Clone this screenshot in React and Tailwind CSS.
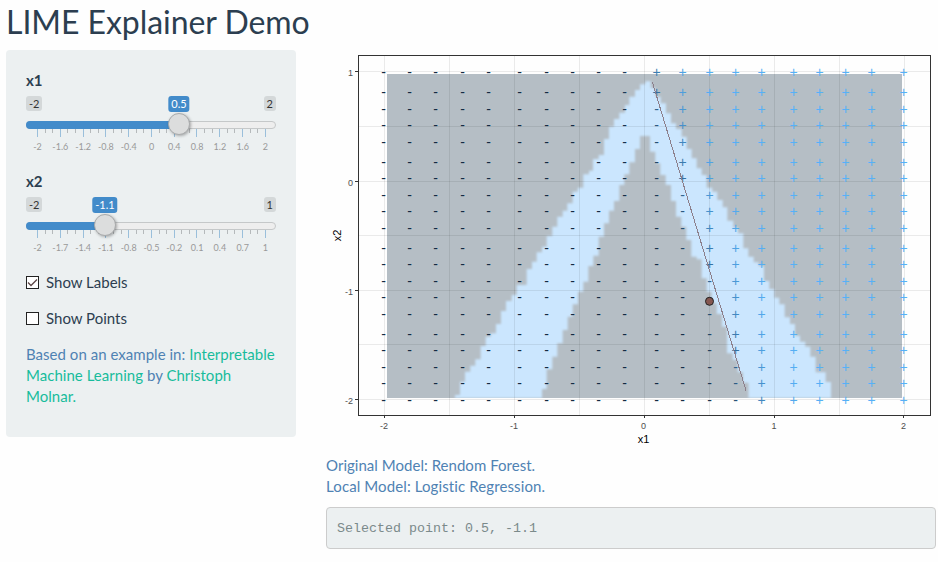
const COLS = [383.5, 409.5, 435.5, 462.5, 488.5, 519.5, 546.5, 572.5, 598.5, 624.5, 656.5, 682.5, 709.5, 735.5, 761.5, 793.5, 819.5, 845.5, 871.5, 903.5];
const ROWS = [72.5, 92.5, 109.5, 125.5, 142.5, 162.5, 178.5, 195.5, 211.5, 228.5, 248.5, 264.5, 281.5, 297.5, 314.5, 334.5, 350.5, 367.5, 383.5, 400.5];

// Each edge of the decision region is a staircase of [x, yEnd] pairs, top to bottom.
const OUTER_LEFT = [
  [645.3, 84.3], [640, 90], [635, 96.7], [629.3, 105], [625, 112.7], [619.3, 119], [614, 126.7], [609, 139],
  [604, 155], [598.7, 159], [593, 170.7], [589, 174.3], [583.3, 187.7], [577.7, 191.7], [572.7, 203.3],
  [567.3, 210.7], [562.7, 216.7], [557.3, 226.7], [552.3, 236], [546.7, 246.7], [542, 252.3], [536.7, 261.7],
  [532, 269], [526.7, 285], [516.7, 295], [511.7, 301], [506, 311], [501, 324], [496, 333.3], [490.7, 336.7],
  [485.7, 346], [480.7, 359.3], [475.3, 365.7], [470.3, 371.7], [465, 381.7], [460, 395], [455, 398],
];
const INNER_LEFT = [
  [640, 149], [635, 162.3], [629.3, 174.3], [624.3, 185], [619.3, 201], [614, 210.7], [609, 223.3], [604, 236.7],
  [598.7, 255.7], [593.3, 266], [588.3, 281.7], [583.3, 291.7], [578, 304.3], [572.7, 316.7], [567.7, 330],
  [562.7, 343.3], [557.3, 356.7], [552.3, 369.3], [546.7, 389], [542, 398],
];
const INNER_RIGHT = [
  [650, 151.7], [655.3, 163.3], [660.3, 175], [665.7, 185], [671, 201], [676, 216.7], [681.3, 226.7], [686.3, 240],
  [691.3, 256.7], [696.7, 259.3], [701.7, 278.3], [706.7, 291.7], [711.7, 303.3], [716.7, 314], [722, 326.7],
  [727, 353.3], [732.7, 360], [737.7, 372.3], [743, 382.7], [748.5, 398],
];
const OUTER_RIGHT = [
  [650.7, 88], [655.7, 96.7], [660.7, 103.3], [666, 113.3], [671, 123.3], [676, 129], [681.7, 136.7],
  [686.7, 149], [691.7, 158.3], [696.7, 168.3], [701.7, 175], [706.7, 187.7], [712.3, 191.7], [717.3, 200],
  [722.7, 207.3], [727.3, 220.7], [733.3, 227.5], [738, 233.3], [743.3, 248.3], [748.3, 256.7], [753.7, 262.3],
  [758.7, 266], [764, 281], [769.3, 289], [774.3, 297.7], [779.3, 304.3], [784.7, 317.3], [790, 324],
  [795, 335.7], [800, 341.7], [805.3, 346.7], [810.3, 356.7], [815.7, 372.3], [825.7, 382], [831, 398],
];

function stairs(edge, top) {
  const pts = [];
  let y = top;
  for (const [x, end] of edge) {
    pts.push([x, y], [x, end]);
    y = end;
  }
  return pts;
}

const REGION = [
  ...stairs(OUTER_RIGHT, 81.3),
  ...stairs(INNER_RIGHT, 136).reverse(),
  ...stairs(INNER_LEFT, 136),
  ...stairs(OUTER_LEFT, 81.3).reverse(),
].map((p) => p.join(",")).join(" ");

const probability = (x, y) => 1 / (1 + Math.exp(-(x - (652.3 + ((y - 82) * 94) / 309.5)) / 15));

function shade(p) {
  const lo = [19, 43, 67];
  const hi = [86, 177, 247];
  return `rgb(${lo.map((c, i) => Math.round(c + (hi[i] - c) * p)).join(",")})`;
}

function Plot() {
  return (
    <svg className="block" width="610" height="400" viewBox="326 50 610 400" fontFamily="'Liberation Sans', Arial, sans-serif">
      <defs>
        <clipPath id="raster"><rect x="387" y="74" width="515" height="324" /></clipPath>
        <filter id="interp" x="-5%" y="-5%" width="110%" height="110%"><feGaussianBlur stdDeviation="1" /></filter>
      </defs>
      <rect x="387" y="74" width="515" height="324" fill="#b5bec5" />
      <g clipPath="url(#raster)">
        <polygon points={REGION} fill="#cbe6fe" filter="url(#interp)" />
      </g>
      <g stroke="#000" strokeOpacity="0.08">
        {[384.5, 449.5, 514.5, 579.5, 644.5, 709.5, 774.5, 839.5, 904.5].map((x) => <path key={x} d={`M${x} 56V415`} />)}
        {[71.5, 126.5, 181.5, 235.5, 290.5, 344.5, 399.5].map((y) => <path key={y} d={`M359 ${y}H930`} />)}
      </g>
      <g fontSize="14" textAnchor="middle">
        {COLS.map((x) => ROWS.map((y) => {
          const p = probability(x, y);
          return (
            <text key={`${x} ${y}`} x={x} y={y + 4.5} fill={shade(p)}>{p > 0.5 ? "+" : "-"}</text>
          );
        }))}
      </g>
      <path d="M652.3 82L746.3 391.5" stroke="#8c7f8b" fill="none" shapeRendering="crispEdges" />
      <circle cx="709.5" cy="301.3" r="4" fill="#855750" stroke="#222" />
      <rect x="358.5" y="55.5" width="572" height="360" fill="none" stroke="#333" />
      <path d="M355 71.5h3M355 181.5h3M355 290.5h3M355 399.5h3M384.5 416v2M514.5 416v2M644.5 416v2M774.5 416v2M903.5 416v2" stroke="#333" />
      <g fontSize="9" fill="#4d4d4d">
        <g textAnchor="end">
          <text x="353" y="76">1</text>
          <text x="353" y="186">0</text>
          <text x="353" y="295">-1</text>
          <text x="353" y="404">-2</text>
        </g>
        <g textAnchor="middle">
          <text x="384" y="429">-2</text>
          <text x="514" y="429">-1</text>
          <text x="643.5" y="429">0</text>
          <text x="774" y="429">1</text>
          <text x="903.5" y="429">2</text>
        </g>
      </g>
      <g fontSize="11" fill="#000" textAnchor="middle">
        <text x="643.5" y="443">x1</text>
        <text transform="translate(341 235.5) rotate(-90)">x2</text>
      </g>
    </svg>
  );
}

const TICKS = Array.from({ length: 31 }, (_, i) => i);

function Slider({ name, min, max, value, pos, labels }) {
  return (
    <div className="h-[101px]">
      <div className="h-[26px] text-[15px] leading-[21px] font-bold">{name}</div>
      <div className="relative flex h-[25px] justify-between text-[11px] leading-[15px] text-[#333]">
        <span className="h-[15px] rounded-[3px] bg-[#d4d8d9] px-[3px]">{min}</span>
        <span className="h-[15px] rounded-[3px] bg-[#d4d8d9] px-[3px]">{max}</span>
        <span className="absolute top-0 h-4 -translate-x-1/2 rounded-[3px] bg-[#428bca] px-[3px] text-white" style={{ left: pos }}>{value}</span>
      </div>
      <div className="relative h-2 rounded-full border border-[#c5c8c9] bg-[#eeeeee]">
        <div className="-mt-px -ml-px h-2 rounded-l-full bg-[#428bca]" style={{ width: pos }} />
        <div className="absolute -top-[9px] z-10 size-[22px] -translate-x-1/2 rounded-full border border-[#a9abac] bg-[#dcdddd] shadow-[1px_1px_3px_rgba(0,0,0,0.3)]" style={{ left: pos - 1 }} />
      </div>
      <div className="ml-[11px] flex h-[12px] w-[229px] justify-between">
        {TICKS.map((i) => <i key={i} className={i % 3 ? "h-1 w-px bg-[#b5b9bb]" : "h-2 w-px bg-[#9abfdb]"} />)}
      </div>
      <div className="ml-[11px] flex w-[229px] justify-between text-[9px] leading-3 text-[#999]">
        {labels.map((l) => <span key={l} className="flex w-px justify-center whitespace-nowrap">{l}</span>)}
      </div>
    </div>
  );
}

function Check({ label, checked }) {
  return (
    <div className="flex h-9 items-start gap-[7px] text-[15px] leading-[21px]">
      <span className="mt-1 size-[13px] border border-[#222] bg-white">
        {checked && (
          <svg width="11" height="11" viewBox="0 0 11 11" fill="none" stroke="#5c4646" strokeWidth="1.3"><path d="M1 5.5L4 8.5L10 2.5" /></svg>
        )}
      </span>
      {label}
    </div>
  );
}

export default function App() {
  return (
    <main className="h-[562px] w-[938px] overflow-hidden bg-[#fefefe] pl-1.5 font-['Lato',sans-serif] text-[#2c3e50]">
      <h2 className="h-[50px] pt-1 text-[32px] leading-[35px] tracking-[-0.05px]">LIME Explainer Demo</h2>
      <div className="flex gap-[30px]">
        <aside className="h-[387px] w-[290px] rounded bg-[#ecf0f1] px-5 pt-5">
          <Slider name="x1" min="-2" max="2" value="0.5" pos={153} labels={["-2", "-1.6", "-1.2", "-0.8", "-0.4", "0", "0.4", "0.8", "1.2", "1.6", "2"]} />
          <Slider name="x2" min="-2" max="1" value="-1.1" pos={79} labels={["-2", "-1.7", "-1.4", "-1.1", "-0.8", "-0.5", "-0.2", "0.1", "0.4", "0.7", "1"]} />
          <Check label="Show Labels" checked />
          <Check label="Show Points" />
          <p className="text-[15px] leading-[21px] tracking-[0.03px] text-[#4f82b3]">
            Based on an example in: <span className="text-[#18bc9c]">Interpretable Machine Learning</span> by <span className="text-[#18bc9c]">Christoph Molnar.</span>
          </p>
        </aside>
        <section className="w-[610px]">
          <Plot />
          <p className="mt-[5px] text-[15px] leading-[21px] text-[#4f82b3]"><span className="tracking-[0.03px]">Original Model: Rendom Forest.</span><br /><span className="tracking-[0.11px]">Local Model: Logistic Regression.</span></p>
          <pre className="mt-[10px] h-[42px] rounded border border-[#cccccc] bg-[#ecf0f1] px-[10px] font-['Liberation_Mono',monospace] text-[13.33px] leading-[41px] text-[#7b8a8b]">Selected point: 0.5, -1.1</pre>
        </section>
      </div>
    </main>
  );
}
